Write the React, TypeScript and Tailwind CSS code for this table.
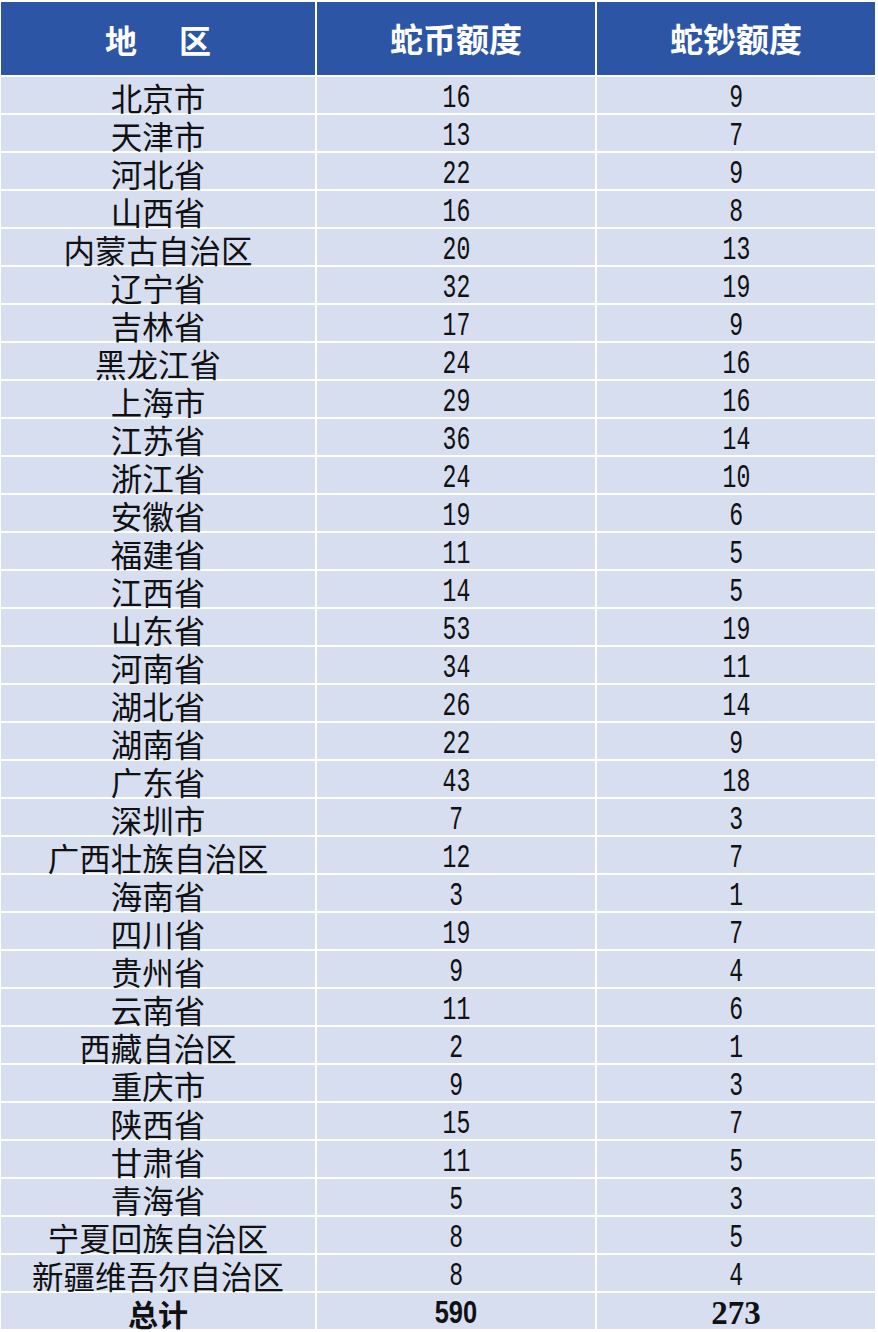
import React from "react";

const rows: [string, number, number][] = [
  ["北京市", 16, 9],
  ["天津市", 13, 7],
  ["河北省", 22, 9],
  ["山西省", 16, 8],
  ["内蒙古自治区", 20, 13],
  ["辽宁省", 32, 19],
  ["吉林省", 17, 9],
  ["黑龙江省", 24, 16],
  ["上海市", 29, 16],
  ["江苏省", 36, 14],
  ["浙江省", 24, 10],
  ["安徽省", 19, 6],
  ["福建省", 11, 5],
  ["江西省", 14, 5],
  ["山东省", 53, 19],
  ["河南省", 34, 11],
  ["湖北省", 26, 14],
  ["湖南省", 22, 9],
  ["广东省", 43, 18],
  ["深圳市", 7, 3],
  ["广西壮族自治区", 12, 7],
  ["海南省", 3, 1],
  ["四川省", 19, 7],
  ["贵州省", 9, 4],
  ["云南省", 11, 6],
  ["西藏自治区", 2, 1],
  ["重庆市", 9, 3],
  ["陕西省", 15, 7],
  ["甘肃省", 11, 5],
  ["青海省", 5, 3],
  ["宁夏回族自治区", 8, 5],
  ["新疆维吾尔自治区", 8, 4],
];

const cjk = "font-['Noto_Sans_CJK_SC',sans-serif]";

function Num({ v, bold }: { v: number | string; bold?: boolean }) {
  return (
    <span
      className={
        bold
          ? "inline-block font-['Liberation_Sans',sans-serif] font-bold text-[31px] scale-x-[0.82]"
          : "inline-block font-['Liberation_Mono',monospace] text-[34px] scale-x-[0.68]"
      }
    >
      {v}
    </span>
  );
}

export default function App() {
  const cell = "bg-[#d6def0] h-[36px] flex items-center justify-center text-[#111] leading-[30px] overflow-visible";
  return (
    <div className="w-[878px] h-[1332px] bg-white overflow-hidden pt-[2px] pl-[1px]">
      <div className="grid grid-cols-[314px_278px_278px] gap-x-[2px] gap-y-[2px]">
        <div className={`bg-[#2d55a5] h-[73px] flex items-center justify-center text-white font-bold text-[32px] gap-[42px] ${cjk}`}>
          <span>地</span>
          <span>区</span>
        </div>
        <div className={`bg-[#2d55a5] h-[73px] flex items-center justify-center text-white font-bold text-[33px] ${cjk}`}>
          蛇币额度
        </div>
        <div className={`bg-[#2d55a5] h-[73px] flex items-center justify-center text-white font-bold text-[33px] ${cjk}`}>
          蛇钞额度
        </div>
        {rows.map(([name, a, b]) => (
          <React.Fragment key={name}>
            <div className={`${cell} ${cjk} text-[31.5px] pt-[4px]`}>{name}</div>
            <div className={`${cell} pt-[5px]`}>
              <Num v={a} />
            </div>
            <div className={`${cell} pt-[5px]`}>
              <Num v={b} />
            </div>
          </React.Fragment>
        ))}
        <div className={`${cell} ${cjk} text-[30px] font-bold pt-[3px]`}>总计</div>
        <div className={`${cell} pt-[4px]`}>
          <Num v={590} bold />
        </div>
        <div className={`${cell} pt-[4px]`}>
          <span className="inline-block font-['Liberation_Serif',serif] font-bold text-[33px]">273</span>
        </div>
      </div>
    </div>
  );
}
